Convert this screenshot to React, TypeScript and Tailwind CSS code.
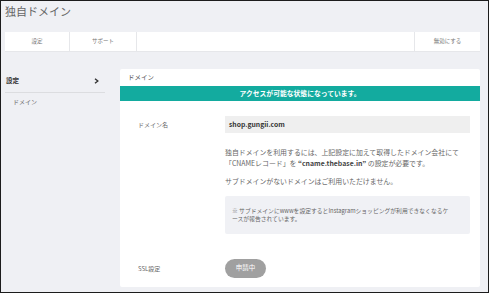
import React from "react";

export default function App() {
  const font = { fontFamily: '"Noto Sans CJK JP", "Noto Sans", sans-serif' };
  return (
    <div
      className="w-[489px] h-[293px] box-border border border-[#1c1c1c] bg-[#eff0f4] pl-[4px] pr-[8px] overflow-hidden flex flex-col"
      style={font}
    >
      {/* Title */}
      <div className="h-[31px] pt-[4px] text-[11px] leading-[12px] text-[#666]">独自ドメイン</div>

      {/* Tab bar */}
      <div className="h-[20px] bg-white flex text-[5.5px] text-[#777] border-b border-[#e6e7ea]">
        <div className="w-[65px] flex items-center justify-center border-r border-[#e6e7ea]">設定</div>
        <div className="w-[67px] flex items-center justify-center border-r border-[#e6e7ea]">サポート</div>
        <div className="flex-1" />
        <div className="w-[66px] flex items-center justify-center border-l border-[#e6e7ea]">無効にする</div>
      </div>

      <div className="flex mt-[17px] flex-1">
        {/* Sidebar */}
        <div className="w-[100px] shrink-0">
          <div className="flex items-center justify-between h-[24px] border-b border-[#dcdde0] pl-[1px] pr-[6px]">
            <span className="text-[6.5px] font-bold text-[#333]">設定</span>
            <svg width="5" height="6" viewBox="0 0 5 6">
              <path d="M1 0.8 L3.8 3 L1 5.2" fill="none" stroke="#333" strokeWidth="1.4" />
            </svg>
          </div>
          <div className="pl-[8px] pt-[5px] text-[6px] leading-[8px] text-[#666]">ドメイン</div>
        </div>

        {/* Card */}
        <div className="ml-[15px] flex-1 h-[218px] bg-white rounded-[2px] flex flex-col">
          <div className="h-[17px] flex items-center pl-[8px] text-[6.5px] text-[#555]">ドメイン</div>
          <div className="h-[15px] bg-[#13ab9f] flex items-center justify-center text-white font-bold text-[6.8px]">
            アクセスが可能な状態になっています。
          </div>
          <div className="pl-[18px] pr-[10px] pt-[15px] flex flex-col">
            {/* Domain row */}
            <div className="flex items-center">
              <div className="w-[87px] text-[6px] text-[#666]">ドメイン名</div>
              <div className="flex-1 h-[17px] bg-[#efefef] flex items-center pl-[4px] text-[6.8px] font-bold text-[#333]">
                shop.gungii.com
              </div>
            </div>
            <div className="flex">
              <div className="w-[87px]" />
              <div className="flex-1">
                <p className="mt-[14px] text-[6.9px] leading-[10.5px] text-[#666] whitespace-nowrap">
                  独自ドメインを利用するには、上記設定に加えて取得したドメイン会社にて
                  <br />
                  「CNAMEレコード」を <span className="font-bold text-[#444]">“cname.thebase.in”</span> の設定が必要です。
                </p>
                <p className="mt-[8px] text-[6.9px] leading-[10.5px] text-[#666]">
                  サブドメインがないドメインはご利用いただけません。
                </p>
                <div className="mt-[9px] h-[38px] bg-[#f0f1f5] rounded-[2px] pl-[7px] pt-[11px] text-[5.8px] leading-[8.5px] text-[#666] whitespace-nowrap">
                  ※ サブドメインにwwwを設定するとInstagramショッピングが利用できなくなるケ
                  <br />
                  ースが報告されています。
                </div>
              </div>
            </div>
            {/* SSL row */}
            <div className="flex items-center mt-[25px]">
              <div className="w-[87px] text-[6px] text-[#666]">SSL設定</div>
              <div className="w-[41px] h-[19px] rounded-full bg-[#a0a0a0] flex items-center justify-center text-white text-[6.5px]">
                申請中
              </div>
            </div>
          </div>
        </div>
      </div>
    </div>
  );
}
